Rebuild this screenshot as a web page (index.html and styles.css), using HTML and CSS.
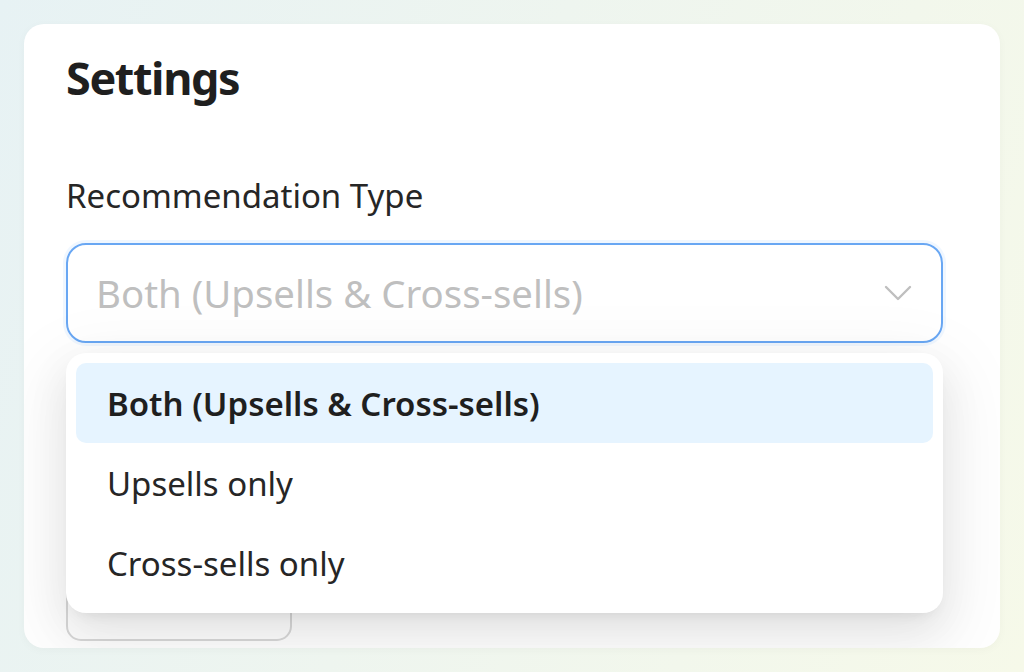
FILE: index.html
```html
<!DOCTYPE html>
<html lang="en">
<head>
<meta charset="utf-8">
<title>Settings</title>
<link rel="stylesheet" href="styles.css">
</head>
<body>
<div class="card">
  <h1 class="title">Settings</h1>
  <div class="field">
    <label class="label">Recommendation Type</label>
    <div class="select-wrap">
      <div class="select">
        <span class="placeholder">Both (Upsells &amp; Cross-sells)</span>
        <svg class="chevron" viewBox="0 0 28 16" width="28" height="16" aria-hidden="true">
          <path d="M2 2 L14 14 L26 2" fill="none" stroke="#bfbfbf" stroke-width="2.4" stroke-linecap="round" stroke-linejoin="round"/>
        </svg>
      </div>
      <div class="dropdown">
        <div class="option selected">Both (Upsells &amp; Cross-sells)</div>
        <div class="option">Upsells only</div>
        <div class="option">Cross-sells only</div>
      </div>
    </div>
  </div>
  <button class="btn" type="button" aria-label="Save"></button>
</div>
</body>
</html>
```

FILE: styles.css
```css
html, body {
  margin: 0;
  padding: 0;
}
body {
  width: 1024px;
  height: 672px;
  box-sizing: border-box;
  padding: 24px 24px 0 24px;
  background: linear-gradient(110deg, #e7f2f4 0%, #eef5ef 45%, #f6f9e9 100%);
  font-family: "Noto Sans", "Open Sans", sans-serif;
  overflow: hidden;
}
.card {
  width: 976px;
  height: 624px;
  box-sizing: border-box;
  background: #ffffff;
  border-radius: 20px;
  padding: 19px 57px 0 42px;
  box-shadow: 0 2px 10px rgba(0, 0, 0, 0.03);
  overflow: hidden;
}
.title {
  margin: 0;
  font-size: 45px;
  letter-spacing: -1.4px;
  line-height: 70px;
  font-weight: 700;
  color: #1f1f1f;
}
.field {
  margin-top: 58px;
}
.label {
  display: block;
  font-size: 33px;
  line-height: 50px;
  color: #262626;
}
.select-wrap {
  position: relative;
  margin-top: 22px;
}
.select {
  height: 100px;
  box-sizing: border-box;
  border: 2px solid #69a7f3;
  border-radius: 20px;
  box-shadow: 0 0 0 3px rgba(64, 150, 255, 0.08);
  display: flex;
  align-items: center;
  justify-content: space-between;
  padding: 0 29px 0 28px;
}
.placeholder {
  font-size: 38.4px;
  color: #bfbfbf;
}
.chevron {
  display: block;
}
.dropdown {
  position: absolute;
  left: 0;
  right: 0;
  top: 110px;
  background: #ffffff;
  border-radius: 20px;
  padding: 10px;
  box-shadow: 0 15px 40px 0 rgba(0, 0, 0, 0.08), 0 8px 15px -10px rgba(0, 0, 0, 0.12), 0 22px 70px 20px rgba(0, 0, 0, 0.05);
  z-index: 2;
}
.option {
  height: 80px;
  display: flex;
  align-items: center;
  padding: 0 31px;
  border-radius: 10px;
  font-size: 33px;
  color: #262626;
}
.option.selected {
  background: #e6f4ff;
  font-weight: 600;
  color: #1f1f1f;
}
.btn {
  display: block;
  margin-top: 218px;
  width: 226px;
  height: 80px;
  border: 2px solid #d9d9d9;
  border-radius: 15px;
  background: #ffffff;
}
```
